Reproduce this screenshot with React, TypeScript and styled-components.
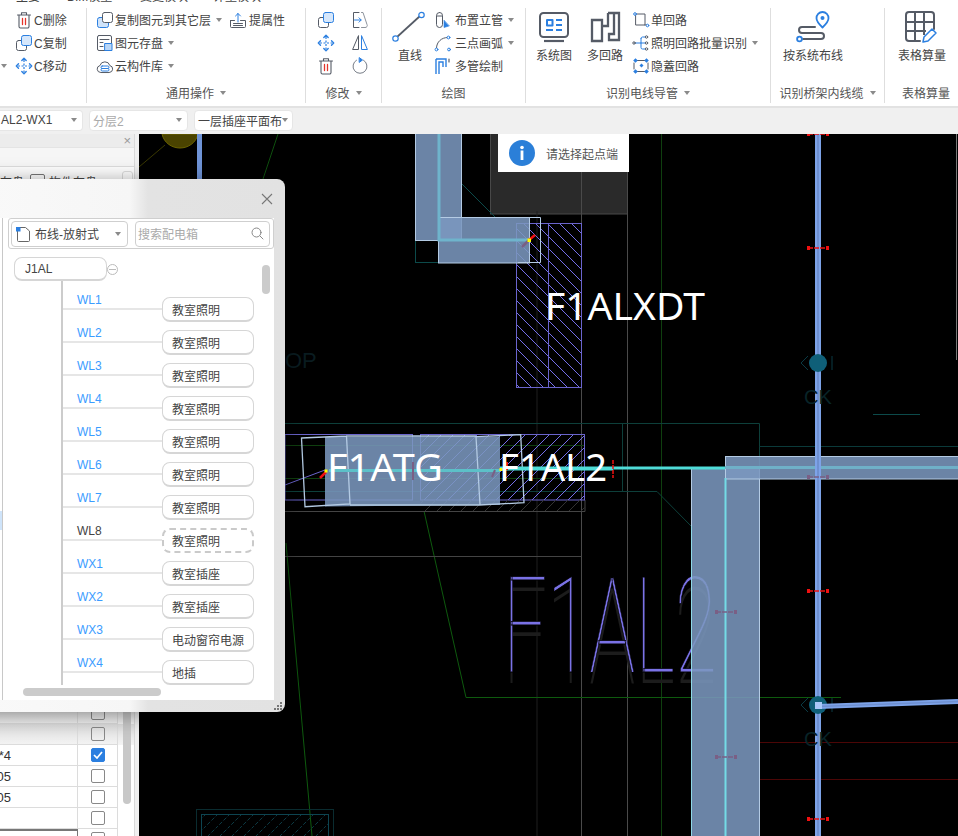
import React from "react";
import styled, { createGlobalStyle } from "styled-components";

const Global = createGlobalStyle`
  html, body { margin: 0; padding: 0; background: #000; }
  * { box-sizing: border-box; }
  body { font-family: "Liberation Sans", "Noto Sans CJK SC", sans-serif; }
`;

const CJK = `"Liberation Sans", "Noto Sans CJK SC", sans-serif`;
const BLUE = "#2b7fe0";
const GRAY = "#555b66";

const Root = styled.div`
  width: 958px;
  height: 836px;
  overflow: hidden;
  display: flex;
  flex-direction: column;
  font-family: ${CJK};
  font-size: 12px;
  color: #444;
`;
const TopStrip = styled.div`
  height: 5px;
  flex: none;
  background: #fff;
  overflow: hidden;
  display: flex;
`;
const TopTab = styled.span<{ $w: number }>`
  width: ${(p) => p.$w}px;
  flex: none;
  font-size: 12px;
  line-height: 14px;
  margin-top: -10px;
  color: #444;
`;
const Ribbon = styled.div`
  height: 103px;
  flex: none;
  background: #fff;
  border-bottom: 2px solid #e2e2e2;
  display: flex;
  padding-top: 3px;
  overflow: hidden;
`;
const Group = styled.div<{ $w: number; $last?: boolean }>`
  width: ${(p) => p.$w}px;
  flex: none;
  height: 95px;
  display: flex;
  flex-direction: column;
  border-right: ${(p) => (p.$last ? "none" : "1px solid #dedede")};
`;
const GroupBody = styled.div<{ $pl?: number }>`
  height: 74px;
  display: flex;
  padding-left: ${(p) => p.$pl ?? 0}px;
`;
const GroupLabel = styled.div`
  height: 21px;
  display: flex;
  align-items: center;
  justify-content: center;
  gap: 6px;
  color: #555;
`;
const Column = styled.div<{ $ml?: number }>`
  display: flex;
  flex-direction: column;
  margin-left: ${(p) => p.$ml ?? 0}px;
`;
const Row = styled.div`
  height: 23px;
  display: flex;
  align-items: center;
  white-space: nowrap;
`;
const Slot = styled.span<{ $w?: number; $ml?: number }>`
  width: ${(p) => p.$w ?? 19}px;
  margin-left: ${(p) => p.$ml ?? 0}px;
  flex: none;
  display: flex;
  align-items: center;
`;
const Caret = styled.i<{ $ml?: number }>`
  display: inline-block;
  flex: none;
  width: 0;
  height: 0;
  margin-left: ${(p) => p.$ml ?? 0}px;
  border-left: 3.5px solid transparent;
  border-right: 3.5px solid transparent;
  border-top: 4px solid #8a8a8a;
`;
const IconGrid = styled.div`
  display: grid;
  grid-template-columns: 34px 34px;
  grid-auto-rows: 23px;
  padding: 0 0 0 3px;
  justify-items: center;
  align-items: center;
`;
const Large = styled.div<{ $w?: number; $ml?: number }>`
  width: ${(p) => p.$w ?? 36}px;
  margin-left: ${(p) => p.$ml ?? 0}px;
  flex: none;
  display: flex;
  flex-direction: column;
  align-items: center;
  padding-top: 1px;
  white-space: nowrap;
`;
const LargeIcon = styled.div`
  height: 36px;
  width: 36px;
  flex: none;
  display: flex;
  align-items: center;
  justify-content: center;
`;
const LargeText = styled.div`
  line-height: 18px;
  margin-top: 2px;
  color: #444;
`;

const Toolbar = styled.div`
  height: 26px;
  flex: none;
  background: #f0f0f0;
  display: flex;
  align-items: center;
  gap: 6px;
  padding-bottom: 2px;
`;
const Combo = styled.div<{ $w: number; $muted?: boolean; $flush?: boolean }>`
  width: ${(p) => p.$w}px;
  height: 21px;
  flex: none;
  background: #fff;
  border: 1px solid #e6e6e6;
  border-left-width: ${(p) => (p.$flush ? 0 : 1)}px;
  border-radius: ${(p) => (p.$flush ? "0 4px 4px 0" : "4px")};
  display: flex;
  align-items: center;
  justify-content: space-between;
  padding: 0 5px 0 ${(p) => (p.$flush ? 1 : 3)}px;
  color: ${(p) => (p.$muted ? "#aaa" : "#444")};
  white-space: nowrap;
`;

const Main = styled.div`
  flex: 1;
  min-height: 0;
  display: flex;
  position: relative;
  overflow: hidden;
`;
const SidePanel = styled.div`
  width: 139px;
  flex: none;
  background: #f0f0f0;
  display: flex;
  flex-direction: column;
  overflow: hidden;
`;
const PanelInner = styled.div`
  width: 135px;
  flex: 1;
  min-height: 0;
  display: flex;
  flex-direction: column;
  background: #fff;
  border-right: 1px solid #d9d9d9;
`;
const PanelHead = styled.div`
  height: 13px;
  background: #ececec;
  display: flex;
  justify-content: flex-end;
  align-items: center;
  padding-right: 3px;
  color: #999;
  font-size: 13px;
  line-height: 13px;
`;
const PanelSpace = styled.div`
  height: 20px;
  background: #f6f6f6;
  border-top: 1px solid #e4e4e4;
  border-bottom: 1px solid #ddd;
`;
const PanelTabs = styled.div`
  height: 29px;
  background: #fff;
  display: flex;
  align-items: center;
  gap: 4px;
  white-space: nowrap;
`;
const TabBox = styled.span`
  width: 15px;
  height: 15px;
  border: 1px solid #777;
  border-radius: 2px;
  flex: none;
  margin-left: 2px;
`;
const TabEnd = styled.span`
  width: 11px;
  height: 14px;
  border: 1px solid #ddd;
  border-radius: 3px;
  flex: none;
  margin-left: 21px;
  align-self: flex-start;
  margin-top: 4px;
`;
const Table = styled.div`
  margin-top: auto;
  margin-bottom: -14px;
  display: flex;
  flex-direction: column;
  position: relative;
`;
const TRow = styled.div<{ $shade?: boolean }>`
  height: 21px;
  flex: none;
  display: flex;
  background: ${(p) => (p.$shade ? "linear-gradient(#dedede, #f4f4f4)" : "#fff")};
`;
const TCell = styled.div<{ $boxed?: boolean }>`
  width: 78px;
  flex: none;
  display: flex;
  justify-content: flex-end;
  align-items: center;
  padding-right: 66px;
  white-space: nowrap;
  overflow: hidden;
  color: #333;
  font-size: 13px;
  border-right: 1px solid ${(p) => (p.$boxed ? "#777" : "#dcdcdc")};
  border-bottom: 1px solid #dcdcdc;
  border-top: ${(p) => (p.$boxed ? "2px solid #777" : "none")};
`;
const CheckCell = styled.div`
  width: 40px;
  flex: none;
  display: flex;
  align-items: center;
  justify-content: center;
  border-right: 1px solid #dcdcdc;
  border-bottom: 1px solid #dcdcdc;
`;
const Check = styled.span<{ $on?: boolean }>`
  width: 14px;
  height: 14px;
  border-radius: 2px;
  border: 1px solid ${(p) => (p.$on ? BLUE : "#888")};
  background: ${(p) => (p.$on ? BLUE : "transparent")};
  display: flex;
  align-items: center;
  justify-content: center;
`;
const PanelScroll = styled.div`
  position: absolute;
  left: 123px;
  top: 0;
  bottom: 46px;
  width: 8px;
  border-radius: 4px;
  background: #c8c8c8;
`;

const Canvas = styled.div`
  flex: 1;
  min-width: 0;
  position: relative;
  background: #000;
`;
const CadSvg = styled.svg`
  display: block;
  width: 819px;
  height: 702px;
`;
const Toast = styled.div`
  position: absolute;
  left: 359px;
  top: 0;
  width: 131px;
  height: 38px;
  background: #fff;
  display: flex;
  align-items: center;
  padding-left: 11px;
  gap: 11px;
  color: #555;
`;

const Dialog = styled.div`
  position: absolute;
  left: -60px;
  top: 45px;
  width: 345px;
  height: 533px;
  border-radius: 8px;
  background: linear-gradient(90deg, #fafafa 0, #f6f6f6 190px, #e3e3e3 208px, #e2e2e2 100%);
  box-shadow: 0 3px 22px rgba(0, 0, 0, 0.42);
  display: flex;
  flex-direction: column;
  overflow: hidden;
  z-index: 5;
`;
const DialogHead = styled.div`
  height: 39px;
  flex: none;
  display: flex;
  justify-content: flex-end;
  align-items: center;
  padding-right: 12px;
`;
const DialogBody = styled.div`
  height: 482px;
  flex: none;
  margin-right: 11px;
  display: flex;
  background: #fff;
`;
const LeftList = styled.div`
  width: 63px;
  flex: none;
  background: #fff;
  border-right: 1px solid #c8c8c8;
  padding-top: 293px;
`;
const ListPick = styled.div`
  height: 19px;
  background: #cfe4fa;
`;
const Pane = styled.div`
  flex: 1;
  min-width: 0;
  position: relative;
  display: flex;
  flex-direction: column;
`;
const FilterBar = styled.div`
  height: 31px;
  flex: none;
  margin: 0 0 0 5px;
  width: 266px;
  border: 1px solid #cfcfcf;
  border-radius: 3px;
  display: flex;
  align-items: center;
  gap: 7px;
  padding: 0 2px;
`;
const KindSelect = styled.div`
  width: 117px;
  height: 26px;
  flex: none;
  border: 1px solid #cfcfcf;
  border-radius: 4px;
  display: flex;
  align-items: center;
  padding: 0 6px 0 3px;
  gap: 4px;
  font-size: 12px;
  color: #444;
`;
const KindText = styled.span`
  flex: 1;
  white-space: nowrap;
`;
const Search = styled.div`
  width: 135px;
  height: 26px;
  flex: none;
  border: 1px solid #cfcfcf;
  border-radius: 4px;
  display: flex;
  align-items: center;
  justify-content: space-between;
  padding: 0 5px 0 2px;
  color: #aaa;
`;
const TreeArea = styled.div`
  flex: 1;
  min-height: 0;
  padding: 8px 0 0 11px;
  overflow: hidden;
`;
const RootNode = styled.div`
  width: 93px;
  height: 24px;
  position: relative;
  border: 1px solid #d6d6d6;
  border-bottom-width: 2px;
  border-radius: 8px;
  display: flex;
  align-items: center;
  padding: 1px 0 0 10px;
  color: #444;
`;
const Collapse = styled.span`
  position: absolute;
  left: 92px;
  top: 6px;
  width: 11px;
  height: 11px;
  border: 1px solid #bbb;
  border-radius: 50%;
  display: flex;
  align-items: center;
  justify-content: center;
  &::after {
    content: "";
    width: 7px;
    height: 1px;
    background: #bbb;
  }
`;
const Trunk = styled.div`
  margin-left: 47px;
  width: 193px;
  height: 404px;
  padding-top: 16px;
  border-left: 2px solid #ccc;
`;
const Branch = styled.div`
  height: 33px;
  display: flex;
  align-items: flex-start;
`;
const Wire = styled.div<{ $plain?: boolean }>`
  width: 99px;
  height: 19px;
  margin-top: -6px;
  flex: none;
  border-bottom: 2px solid #e6e6e6;
  padding: 1px 0 0 14px;
  line-height: 16px;
  font-size: 12px;
  color: ${(p) => (p.$plain ? "#444" : "#3b9cff")};
`;
const Leaf = styled.div<{ $dashed?: boolean }>`
  width: 92px;
  height: 25px;
  flex: none;
  border: ${(p) => (p.$dashed ? "2px dashed #cacaca" : "1px solid #d6d6d6")};
  border-bottom-width: 2px;
  border-radius: 8px;
  display: flex;
  align-items: center;
  padding-left: ${(p) => (p.$dashed ? 8 : 9)}px;
  white-space: nowrap;
  color: #444;
`;
const VScroll = styled.div`
  position: absolute;
  left: 259px;
  top: 47px;
  width: 8px;
  height: 29px;
  border-radius: 4px;
  background: #cbcbcb;
`;
const HScroll = styled.div`
  position: absolute;
  left: 20px;
  top: 470px;
  width: 138px;
  height: 8px;
  border-radius: 4px;
  background: #cbcbcb;
`;
const Grip = styled.div`
  height: 12px;
  flex: none;
  display: flex;
  justify-content: flex-end;
  padding: 2px 2px 0 0;
`;

const Svg = ({ s = 18, h, children }: { s?: number; h?: number; children: React.ReactNode }) => (
  <svg width={s} height={h ?? s} viewBox={`0 0 ${s} ${h ?? s}`} fill="none" strokeLinecap="round" strokeLinejoin="round">
    {children}
  </svg>
);

const Trash = () => (
  <Svg s={18}>
    <path d="M2.500 4h13M6.500 4V1.700h5V4M4 4v11.500A1.500 1.500 0 0 0 5.500 17h7a1.500 1.500 0 0 0 1.500-1.500V4" stroke={GRAY} strokeWidth="1.100" />
    <path d="M7.500 7.500v6M10.500 7.500v6" stroke="#e5342b" strokeWidth="1.300" />
  </Svg>
);
const CopyA = () => (
  <Svg s={18}>
    <rect x="1.500" y="6.500" width="10" height="10" rx="2" stroke={GRAY} fill="#fff" />
    <rect x="6.500" y="1.500" width="10" height="10" rx="2" stroke={BLUE} fill="#d6e7fb" />
  </Svg>
);
const CopyB = () => (
  <Svg s={18}>
    <rect x="1.500" y="6.500" width="11" height="10" rx="2" stroke={BLUE} fill="#cfe3fa" />
    <rect x="6.500" y="1.500" width="10" height="10" rx="2" stroke={GRAY} fill="#fff" />
  </Svg>
);
const Move = () => (
  <Svg s={18}>
    <path d="M9 3v12M3 9h12" stroke={BLUE} strokeWidth="1.200" strokeDasharray="2 1.500" strokeLinecap="butt" />
    <path d="M6.800 3.500 9 1.300l2.200 2.200M6.800 14.500 9 16.700l2.200-2.200M3.500 6.800 1.300 9l2.200 2.200M14.500 6.800 16.700 9l-2.200 2.200" stroke={BLUE} strokeWidth="1.400" />
  </Svg>
);
const Lift = () => (
  <Svg s={18}>
    <path d="M1.500 9.500v6a1 1 0 0 0 1 1h13a1 1 0 0 0 1-1v-6h-5M5.500 9.500h-4M4.500 12.500h9M4.500 14.500h9" stroke={GRAY} />
    <path d="M9 11V2.500M6.500 5 9 2.500 11.500 5" stroke={BLUE} />
  </Svg>
);
const Store = () => (
  <Svg s={18}>
    <rect x="1.500" y="1.500" width="14" height="15" rx="1.500" stroke={GRAY} />
    <path d="M4 5.500h9M4 8.500h3M4 12.500h3" stroke={GRAY} />
    <rect x="9" y="9.500" width="7" height="7" fill="#b9d6f7" stroke={BLUE} />
  </Svg>
);
const Cloud = () => (
  <Svg s={18}>
    <path d="M4.500 15.500a3.500 3.500 0 0 1-.6-6.900 5.200 5.200 0 0 1 10 0 3.500 3.500 0 0 1-.4 6.900z" stroke={GRAY} />
    <rect x="5" y="9" width="8" height="2.500" rx="1.200" stroke={BLUE} />
    <rect x="5" y="11.500" width="8" height="2.500" rx="1.200" stroke={BLUE} />
  </Svg>
);
const Mirror = () => (
  <Svg s={18}>
    <path d="M8 1.500H2.500v15H8" stroke={GRAY} />
    <path d="M10.500 1.500h1.500l4 12a2 2 0 0 1-2 3h-3.500" stroke="#8d939c" />
    <path d="M3.500 9H10M8 6.800 10.200 9 8 11.200" stroke={BLUE} />
  </Svg>
);
const Flip = () => (
  <Svg s={18}>
    <path d="M7.500 2v13.500H2z" stroke={GRAY} />
    <path d="M10.500 2v13.500H16z" stroke={BLUE} />
  </Svg>
);
const Rotate = () => (
  <Svg s={18}>
    <path d="M5.500 3.200A7 7 0 1 0 12.500 3.200" stroke="#777d87" />
    <path d="M8.500 .8 11.500 3 8.500 5.200z" fill={BLUE} stroke={BLUE} />
  </Svg>
);
const LineIcon = () => (
  <Svg s={36}>
    <path d="M5 28 28 7" stroke={GRAY} strokeWidth="1.700" />
    <circle cx="3.500" cy="29.500" r="2.700" stroke={BLUE} strokeWidth="1.200" fill="#fff" />
    <circle cx="29.500" cy="6" r="2.700" stroke={BLUE} strokeWidth="1.200" fill="#fff" />
  </Svg>
);
const Pipe = () => (
  <Svg s={18}>
    <rect x="2.500" y="1.500" width="6" height="15" rx="3" stroke={GRAY} />
    <path d="M2.800 5h5.400" stroke={GRAY} />
    <path d="M10 9.500v7l5-1.500z" fill={BLUE} stroke={BLUE} strokeWidth=".6" />
  </Svg>
);
const Arc = () => (
  <Svg s={18}>
    <path d="M2.500 14c0-6 5-10.500 11-10.500" stroke={GRAY} />
    <circle cx="2.500" cy="15.500" r="1.400" stroke={BLUE} fill="#fff" />
    <circle cx="14.500" cy="3.500" r="1.400" stroke={BLUE} fill="#fff" />
    <circle cx="15" cy="15.500" r="1.400" stroke={BLUE} fill="#fff" />
  </Svg>
);
const Multi = () => (
  <Svg s={18}>
    <path d="M2 2h10v8M5 17V5h4v5M2 2v15M8 17" stroke={BLUE} strokeWidth="1.400" strokeLinecap="butt" strokeLinejoin="miter" />
    <path d="M15 2v3" stroke={GRAY} strokeWidth="1.200" />
  </Svg>
);
const Monitor = () => (
  <Svg s={36}>
    <rect x="4" y="4" width="28" height="24" rx="3.500" stroke={GRAY} strokeWidth="2" />
    <path d="M8 32h20" stroke={GRAY} strokeWidth="2.200" strokeLinecap="butt" />
    <rect x="11" y="11" width="5.500" height="5.500" stroke={BLUE} strokeWidth="2" />
    <path d="M20 11h6M20 16h6M20 21h6M10 21h7" stroke={BLUE} strokeWidth="2" strokeLinecap="butt" />
  </Svg>
);
const Maze = () => (
  <Svg s={36}>
    <path d="M21 4H32V31H22V25H27V4M21 4V17H15V32H5V11H15V17" stroke={GRAY} strokeWidth="2.300" strokeLinecap="butt" strokeLinejoin="miter" />
  </Svg>
);
const Single = () => (
  <Svg s={18}>
    <path d="M4 3h9v11H4zM13 14h2" stroke={GRAY} />
    <circle cx="3" cy="3" r="1.300" stroke={BLUE} fill="#fff" />
    <circle cx="15.500" cy="14.500" r="1.300" stroke={BLUE} fill="#fff" />
  </Svg>
);
const Branchy = () => (
  <Svg s={18}>
    <path d="M3 9h6M9 4.500a1.500 1.500 0 0 1 1.500-1.500H13M9 4.500v9a1.500 1.500 0 0 0 1.500 1.500H13M9 9h4" stroke={BLUE} />
    <circle cx="2" cy="9" r="1.200" stroke={GRAY} />
    <circle cx="14.500" cy="3" r="1.200" stroke={GRAY} />
    <circle cx="14.500" cy="9" r="1.200" stroke={GRAY} />
    <circle cx="14.500" cy="15" r="1.200" stroke={GRAY} />
  </Svg>
);
const Hidden = () => (
  <Svg s={18}>
    <path d="M5 3.500h8M5 14.500h8M2 6v6M16 6v6" stroke={GRAY} />
    <path d="M3.500 1.200l2.300 2.300-2.300 2.300-2.300-2.300zM14.500 1.200l2.300 2.300-2.300 2.300-2.300-2.300zM3.500 12.200l2.300 2.300-2.300 2.300-2.300-2.300zM14.500 12.200l2.300 2.300-2.300 2.300-2.300-2.300z" fill={BLUE} />
    <path d="M9.500 6.500l2 2-2 2-2-2z" fill={BLUE} />
  </Svg>
);
const RouteIcon = () => (
  <Svg s={36}>
    <path d="M27.500 3a6 6 0 0 0-6 6.300c0 3.500 6 9.200 6 9.200s6-5.700 6-9.200a6 6 0 0 0-6-6.300z" stroke={BLUE} strokeWidth="1.800" />
    <circle cx="27.500" cy="9" r="2" fill={BLUE} />
    <path d="M20 18H7a3 3 0 0 0 0 6H26a3 3 0 0 1 0 6H8" stroke={GRAY} strokeWidth="2" />
    <circle cx="4.500" cy="30" r="2.400" stroke={BLUE} strokeWidth="1.800" fill="#fff" />
  </Svg>
);
const TableIcon = () => (
  <Svg s={36}>
    <path d="M16 32H5a3 3 0 0 1-3-3V6a3 3 0 0 1 3-3h22a3 3 0 0 1 3 3v14" stroke={GRAY} strokeWidth="2" />
    <path d="M2 13h28M2 22h20M11 3v29M20 3v23" stroke={GRAY} strokeWidth="2" strokeLinecap="butt" />
    <path d="M19 33l1-5 8-8 4 4-8 8z" fill="#fff" stroke={BLUE} strokeWidth="1.500" />
  </Svg>
);

const Close = () => (
  <svg width="12" height="12" viewBox="0 0 12 12" fill="none">
    <path d="M1 1l10 10M11 1 1 11" stroke="#777" strokeWidth="1.100" />
  </svg>
);
const DocIcon = () => (
  <Svg s={16}>
    <path d="M3 1.500h7.500L14.500 5v9.500a1 1 0 0 1-1 1h-10a1 1 0 0 1-1-1V3z" stroke="#666" fill="#fff" />
    <rect x="1" y="1" width="4.500" height="4.500" fill={BLUE} />
  </Svg>
);
const SearchIcon = () => (
  <Svg s={13}>
    <circle cx="5.500" cy="5.500" r="4.500" stroke="#888" />
    <path d="M9 9l3 3" stroke="#888" />
  </Svg>
);
const Tick = () => (
  <svg width="10" height="8" viewBox="0 0 10 8" fill="none">
    <path d="M1 4l3 3 5-6" stroke="#fff" strokeWidth="1.700" />
  </svg>
);
const GripDots = () => (
  <svg width="9" height="9" viewBox="0 0 9 9" fill="#777">
    <rect x="6" y="0" width="2" height="2" />
    <rect x="3" y="3" width="2" height="2" />
    <rect x="6" y="3" width="2" height="2" />
    <rect x="0" y="6" width="2" height="2" />
    <rect x="3" y="6" width="2" height="2" />
    <rect x="6" y="6" width="2" height="2" />
  </svg>
);
const Info = () => (
  <svg width="26" height="26" viewBox="0 0 26 26">
    <circle cx="13" cy="13" r="13" fill="#2b7fd8" />
    <circle cx="13" cy="7.500" r="1.800" fill="#fff" />
    <rect x="11.600" y="10.500" width="2.800" height="9.500" fill="#fff" />
  </svg>
);

const Item = ({ icon, text, caret, w, ml }: { icon: React.ReactNode; text: string; caret?: boolean; w?: number; ml?: number }) => (
  <Row>
    <Slot $w={w} $ml={ml}>{icon}</Slot>
    {text}
    {caret && <Caret $ml={5} />}
  </Row>
);

const BAR = "#7b98bf";
const EDGE = "#b4cbe4";

const RedMark = ({ x, y, dim }: { x: number; y: number; dim?: boolean }) => (
  <g stroke={dim ? "#7a5f85" : "#f01010"} fill={dim ? "#7a5f85" : "#f01010"}>
    <path d={`M${x - 10} ${y}H${x + 10}`} strokeWidth="1.500" strokeDasharray="5 1" />
    <rect x={x - 11} y={y - 2} width="3" height="4" stroke="none" />
    <rect x={x + 8} y={y - 2} width="3" height="4" stroke="none" />
  </g>
);

const CadDrawing = () => (
  <CadSvg viewBox="139 134 819 702">
    <defs>
      <pattern id="hd" width="12" height="12" patternUnits="userSpaceOnUse">
        <path d="M-1-1 13 13M-1 11 1 13M11-1l2 2" stroke="#746ee8" strokeWidth="1" />
      </pattern>
      <pattern id="hu" width="12" height="12" patternUnits="userSpaceOnUse">
        <path d="M-1 13 13-1M-1 1l2-2M11 13l2-2" stroke="#746ee8" strokeWidth="1" />
      </pattern>
      <pattern id="hg" width="12" height="12" patternUnits="userSpaceOnUse">
        <path d="M-1 13 13-1M-1 1l2-2M11 13l2-2" stroke="#333" strokeWidth="1" />
      </pattern>
      <pattern id="ht" width="12" height="12" patternUnits="userSpaceOnUse">
        <path d="M-1 13 13-1M-1 1l2-2M11 13l2-2" stroke="#0c3a44" strokeWidth="1" strokeDasharray="4 2" />
      </pattern>
    </defs>

    <path d="M162 134h36c-2 9-10 14-18 14s-16-5-18-14z" fill="#4a4300" stroke="#6c6400" />
    <path d="M139 167 165 145" stroke="#3a3800" />
    <rect x="197" y="134" width="5" height="46" fill="#6f94d8" />
    <path d="M278 134 263 179" stroke="#0e4f0e" />

    <rect x="490.500" y="126" width="137" height="88" fill="#2a2a2a" stroke="#484848" />
    <path d="M581.500 134V836M627.500 134V836" stroke="#4a4a4a" />
    <path d="M661.500 134V836" stroke="#0f3f0f" />
    <path d="M537 211V836" stroke="#1f1f1f" />
    <path d="M461 183 495 217" stroke="#0c4a4a" />
    <rect x="415.500" y="240.500" width="23" height="22" stroke="#0c4a4a" fill="none" />
    <path d="M285 423.500H759.500V470M622.500 423.500V491.500M285 491.500H657L691 526" stroke="#0d3f3a" fill="none" />
    <path d="M285 445.500H585M285 478.500H585" stroke="#0f3f0f" />
    <path d="M759 446.500H958" stroke="#0b3a3a" />
    <path d="M873 414.500H920" stroke="#0c4a4a" />
    <path d="M286 543 312 836M424 511 466 697.500H841" stroke="#0e5a0e" fill="none" />
    <path d="M285 511.500H585V500M285 556.500H581.500" stroke="#444" fill="none" />
    <path d="M759 742.500H958M759 779.500H958" stroke="#4c0606" />
    <path d="M956.500 134V360" stroke="#777" />

    <rect x="196.500" y="809.500" width="137" height="40" stroke="#0a2c30" fill="none" />
    <rect x="201.500" y="814.500" width="127" height="40" stroke="#0d4450" fill="url(#ht)" />

    <rect x="516.500" y="223.500" width="65" height="164" fill="url(#hd)" stroke="#6a64cc" />
    <path d="M548.500 223V388" stroke="#6a64cc" />
    <rect x="285" y="434.500" width="127.500" height="65.500" stroke="#6a64cc" fill="none" />
    <rect x="420.500" y="434.500" width="164" height="65.500" fill="url(#hu)" stroke="#6a64cc" />
    <rect x="420.500" y="500" width="164" height="11" fill="url(#hg)" />
    <path d="M285 485 325 470" stroke="#6a64cc" />

    <text x="503" y="672" textLength="214" lengthAdjust="spacingAndGlyphs" fontFamily="Roboto, Lato, sans-serif" fontWeight="100" fontSize="134" fill="#1c1c1c" transform="translate(0 11)">F1AL2</text>
    <text x="503" y="672" textLength="214" lengthAdjust="spacingAndGlyphs" fontFamily="Roboto, Lato, sans-serif" fontWeight="100" fontSize="134" fill="#7a72e6" stroke="#000" strokeWidth=".8">F1AL2</text>

    <g fill={BAR} fillOpacity=".87" stroke={EDGE}>
      <rect x="415.500" y="126" width="46" height="114.500" />
      <rect x="438.500" y="217.500" width="91" height="45.500" />
      <path d="M325 437 476 436 480 505 325 506.500z" stroke="none" />
      <path d="M476 436.500H500V505H480z" stroke="none" />
      <rect x="691.500" y="467.500" width="68" height="380" />
      <rect x="725.500" y="456.500" width="240" height="22.500" />
    </g>
    <path d="M529.500 217.500H540.500V262.500H518" stroke={EDGE} fill="none" />
    <path d="M301.500 438 346.500 436 350 504 305 506.700z M476 436.700 520.700 434.700 524 502.700 480 505z M346 436 476 436M350 505 480 505" stroke={EDGE} strokeWidth="1.300" fill="none" />
    <path d="M439 134V240H530" stroke="#6fb4cc" strokeWidth="3" fill="none" />
    <path d="M725.500 478V836" stroke="#74dbe6" strokeWidth="2" />
    <path d="M725 467.500H958" stroke="#6fb0c8" strokeWidth="3" />
    <path d="M691.500 526V836" stroke="#8fd8e6" />

    <path d="M329 470.500H500" stroke="#5cc0c8" strokeWidth="3" />
    <path d="M500 468.500H613" stroke="#4fdcd8" strokeWidth="4" />
    <path d="M613 468H725" stroke="#4fdcd8" strokeWidth="3" />

    <rect x="815" y="134" width="6" height="702" fill="#7da3e8" />
    <rect x="817" y="134" width="2" height="702" fill="#6f90d0" />
    <circle cx="818" cy="363" r="9" fill="#0f5f78" />
    <circle cx="818" cy="705" r="9" fill="#0f5f78" />
    <path d="M801 363 808 356M801 363 808 370M832 356V370M801 705 808 698M801 705 808 712M832 698V712" stroke="#0a3a44" />
    <path d="M818 706.500 958 701.500" stroke="#7da3e8" strokeWidth="5" />
    <path d="M818 706.500 958 701.500" stroke="#6f90d0" strokeWidth="1.500" />
    <rect x="815" y="702" width="7" height="7" fill="#a8c8f8" />
    <text x="804" y="404" fontFamily="Liberation Sans" fontSize="20" fill="#082428">CK</text>
    <text x="804" y="746" fontFamily="Liberation Sans" fontSize="20" fill="#082428">CK</text>
    <text x="285" y="368" fontFamily="Liberation Sans" fontSize="22" fill="#0a1c20">OP</text>

    <RedMark x={818} y={134} />
    <RedMark x={818} y={248} />
    <RedMark x={818} y={591} />
    <RedMark x={818} y={819} />
    <RedMark x={818} y={477} dim />
    <RedMark x={726} y={612} dim />
    <RedMark x={726} y={757} dim />

    <path d="M529 240 535 235" stroke="#f01010" strokeWidth="2.500" />
    <path d="M529 240 522 247" stroke="#7a5f85" strokeWidth="2.500" />
    <rect x="527.500" y="238.500" width="3.500" height="3.500" fill="#ff0" />
    <path d="M320 478 326 472" stroke="#f01010" strokeWidth="2.500" />
    <rect x="324.500" y="469.500" width="3" height="3" fill="#ff0" />
    <rect x="499.500" y="468" width="3" height="3" fill="#ff0" />
    <path d="M613 460V478" stroke="#f01010" strokeWidth="1.500" strokeDasharray="4 1" />
    <path d="M507 462V470" stroke="#f01010" strokeWidth="2" />
    <path d="M413 462V480M495 470 492 477" stroke="#7a5f85" strokeWidth="2" />

    <text x="545" y="320" textLength="160" lengthAdjust="spacingAndGlyphs" fontFamily="Noto Sans" fontSize="39" fill="#fff">F1ALXDT</text>
    <text x="327" y="481" textLength="116" lengthAdjust="spacingAndGlyphs" fontFamily="Noto Sans" fontSize="39" fill="#fff">F1ATG</text>
    <text x="499" y="481" textLength="108" lengthAdjust="spacingAndGlyphs" fontFamily="Noto Sans" fontSize="39" fill="#fff">F1AL2</text>
  </CadSvg>
);

const branches: [string, string][] = [
  ["WL1", "教室照明"], ["WL2", "教室照明"], ["WL3", "教室照明"], ["WL4", "教室照明"],
  ["WL5", "教室照明"], ["WL6", "教室照明"], ["WL7", "教室照明"], ["WL8", "教室照明"],
  ["WX1", "教室插座"], ["WX2", "教室插座"], ["WX3", "电动窗帘电源"], ["WX4", "地插"],
];

const rows = [
  { t: "", shade: true },
  { t: "", shade: true },
  { t: "BV-4*4", on: true },
  { t: "BV-2.05" },
  { t: "BV-2.05" },
  { t: "" },
  { t: "", boxed: true },
];

export default function App() {
  return (
    <Root>
      <Global />
      <TopStrip>
        <TopTab $w={16} />
        <TopTab $w={51}>主要</TopTab>
        <TopTab $w={73}>BIM模型</TopTab>
        <TopTab $w={73}>变更模块</TopTab>
        <TopTab $w={73}>计量模块</TopTab>
      </TopStrip>
      <Ribbon>
        <Group $w={87}>
          <GroupBody>
            <Column $ml={1}>
              <Row><Slot $w={14} /><Slot><Trash /></Slot>C删除</Row>
              <Row><Slot $w={14} /><Slot><CopyA /></Slot>C复制</Row>
              <Row><Slot $w={14}><Caret /></Slot><Slot><Move /></Slot>C移动</Row>
            </Column>
          </GroupBody>
          <GroupLabel />
        </Group>
        <Group $w={219}>
          <GroupBody $pl={9}>
            <Column>
              <Row>
                <Slot><CopyB /></Slot>复制图元到其它层<Caret $ml={5} />
                <Slot $w={20} $ml={7}><Lift /></Slot>提属性
              </Row>
              <Item icon={<Store />} text="图元存盘" caret />
              <Item icon={<Cloud />} text="云构件库" caret />
            </Column>
          </GroupBody>
          <GroupLabel>通用操作<Caret /></GroupLabel>
        </Group>
        <Group $w={76}>
          <GroupBody>
            <IconGrid>
              <CopyA /><Mirror />
              <Move /><Flip />
              <Trash /><Rotate />
            </IconGrid>
          </GroupBody>
          <GroupLabel>修改<Caret /></GroupLabel>
        </Group>
        <Group $w={144}>
          <GroupBody $pl={10}>
            <Large>
              <LargeIcon><LineIcon /></LargeIcon>
              <LargeText>直线</LargeText>
            </Large>
            <Column $ml={6}>
              <Item w={21} icon={<Pipe />} text="布置立管" caret />
              <Item w={21} icon={<Arc />} text="三点画弧" caret />
              <Item w={21} icon={<Multi />} text="多管绘制" />
            </Column>
          </GroupBody>
          <GroupLabel>绘图</GroupLabel>
        </Group>
        <Group $w={245}>
          <GroupBody $pl={10}>
            <Large>
              <LargeIcon><Monitor /></LargeIcon>
              <LargeText>系统图</LargeText>
            </Large>
            <Large $ml={15}>
              <LargeIcon><Maze /></LargeIcon>
              <LargeText>多回路</LargeText>
            </Large>
            <Column $ml={9}>
              <Item icon={<Single />} text="单回路" />
              <Item icon={<Branchy />} text="照明回路批量识别" caret />
              <Item icon={<Hidden />} text="隐蓋回路" />
            </Column>
          </GroupBody>
          <GroupLabel>识别电线导管<Caret /></GroupLabel>
        </Group>
        <Group $w={114}>
          <GroupBody $pl={12}>
            <Large $w={60}>
              <LargeIcon><RouteIcon /></LargeIcon>
              <LargeText>按系统布线</LargeText>
            </Large>
          </GroupBody>
          <GroupLabel>识别桥架内线缆<Caret /></GroupLabel>
        </Group>
        <Group $w={82} $last>
          <GroupBody $pl={13}>
            <Large $w={48}>
              <LargeIcon><TableIcon /></LargeIcon>
              <LargeText>表格算量</LargeText>
            </Large>
          </GroupBody>
          <GroupLabel>表格算量</GroupLabel>
        </Group>
      </Ribbon>
      <Toolbar>
        <Combo $w={83} $flush>AL2-WX1<Caret /></Combo>
        <Combo $w={99} $muted>分层2<Caret /></Combo>
        <Combo $w={99}>一层插座平面布<Caret /></Combo>
      </Toolbar>
      <Main>
        <SidePanel>
          <PanelInner>
            <PanelHead>×</PanelHead>
            <PanelSpace />
            <PanelTabs>
              存盘<TabBox />构件存盘<TabEnd />
            </PanelTabs>
            <Table>
              <PanelScroll />
              {rows.map((r, i) => (
                <TRow key={i} $shade={r.shade}>
                  <TCell $boxed={r.boxed}>{r.t}</TCell>
                  <CheckCell>
                    <Check $on={r.on}>{r.on && <Tick />}</Check>
                  </CheckCell>
                </TRow>
              ))}
            </Table>
          </PanelInner>
        </SidePanel>
        <Canvas>
          <CadDrawing />
          <Toast><Info />请选择起点端</Toast>
        </Canvas>
        <Dialog>
          <DialogHead><Close /></DialogHead>
          <DialogBody>
            <LeftList><ListPick /></LeftList>
            <Pane>
              <FilterBar>
                <KindSelect>
                  <DocIcon />
                  <KindText>布线-放射式</KindText>
                  <Caret />
                </KindSelect>
                <Search>搜索配电箱<SearchIcon /></Search>
              </FilterBar>
              <TreeArea>
                <RootNode>J1AL<Collapse /></RootNode>
                <Trunk>
                  {branches.map(([a, b], i) => (
                    <Branch key={a}>
                      <Wire $plain={i === 7}>{a}</Wire>
                      <Leaf $dashed={i === 7}>{b}</Leaf>
                    </Branch>
                  ))}
                </Trunk>
              </TreeArea>
              <VScroll />
              <HScroll />
            </Pane>
          </DialogBody>
          <Grip><GripDots /></Grip>
        </Dialog>
      </Main>
    </Root>
  );
}
